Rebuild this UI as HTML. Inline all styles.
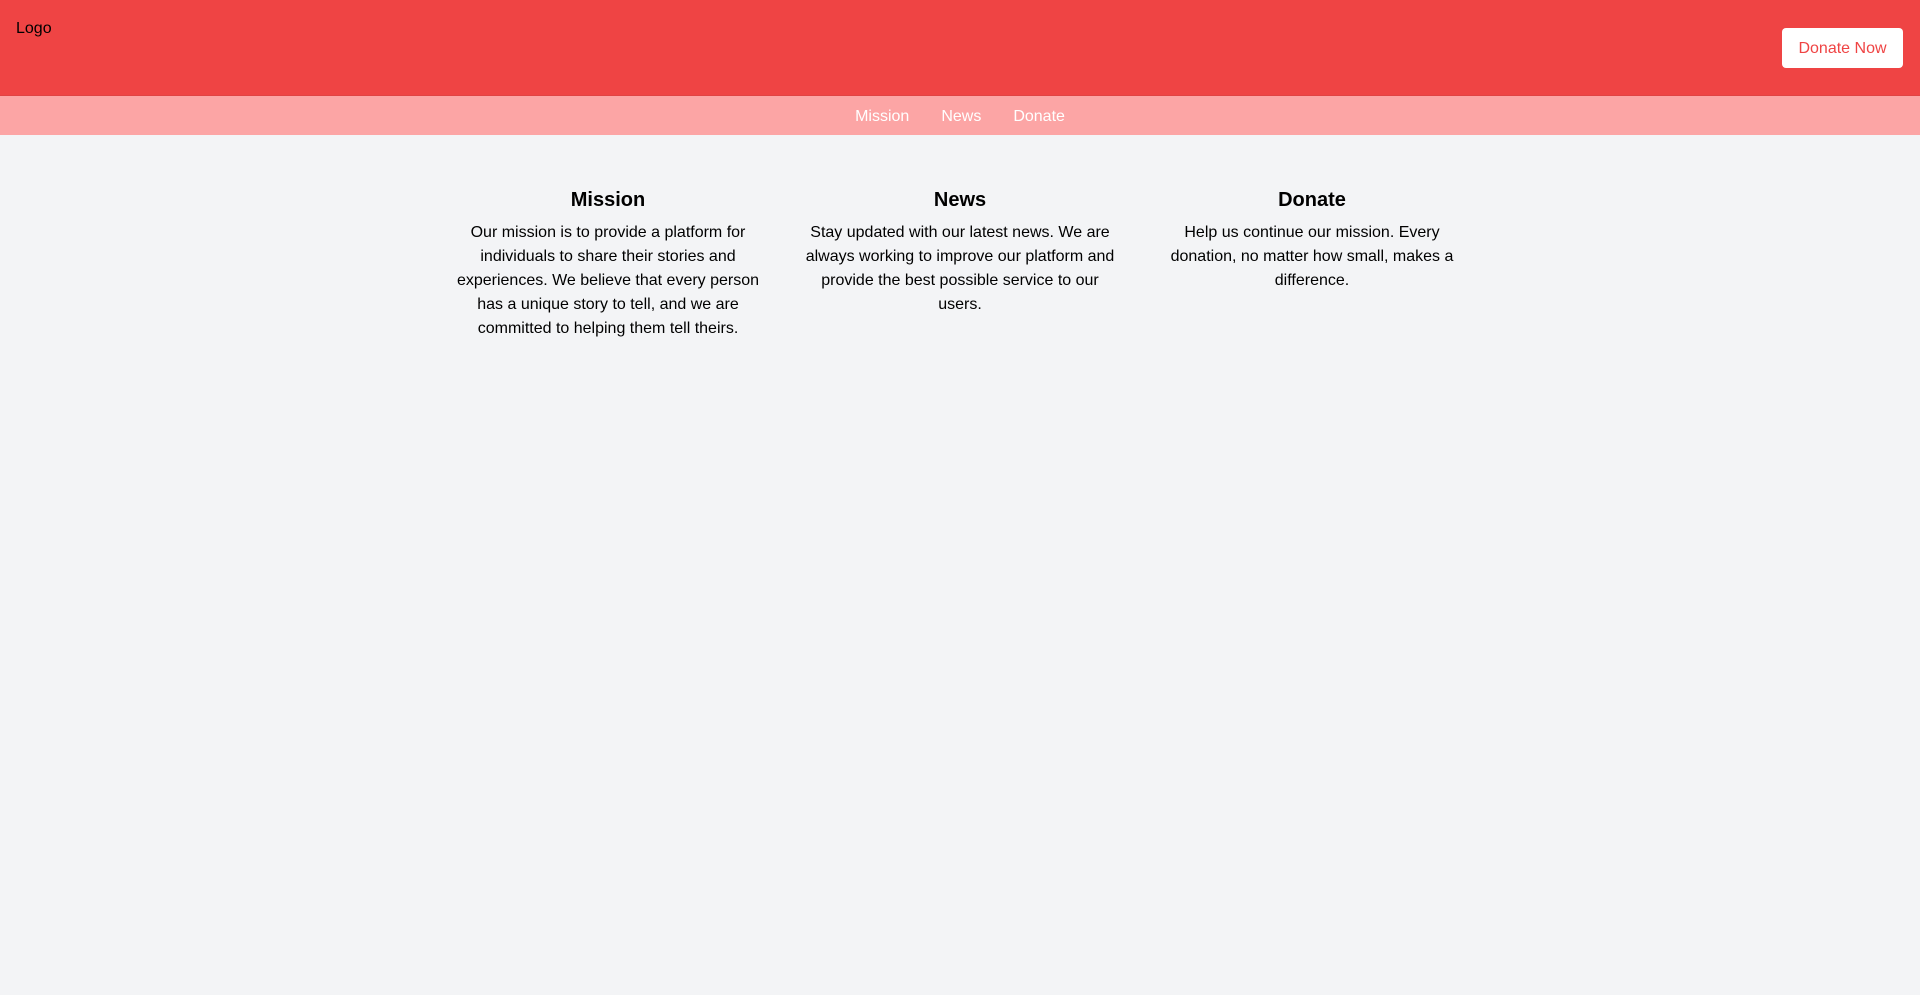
<!DOCTYPE html>
<html><head><meta charset="utf-8"><style>
*{box-sizing:border-box;margin:0;padding:0}
body{width:1920px;height:995px;background:#f3f4f6;font-family:"Liberation Sans",Arial,sans-serif;color:#000;overflow:hidden}
header{height:96px;background:#ef4444;position:relative;border-bottom:1px solid #e04343}
.logo{position:absolute;left:16px;top:19px;font-size:16px;line-height:20px}
.btn{position:absolute;right:17px;top:28px;width:121px;height:40px;background:#fff;border-radius:4px;color:#ef4444;font-size:16px;line-height:41px;text-align:center}
nav{height:39px;background:#fca5a5;display:flex;justify-content:center;align-items:center;gap:32px;padding-top:2px}
nav a{color:#fff;font-size:16px;text-decoration:none}
main{display:flex;justify-content:center;gap:32px;padding-top:51px}
.col{width:320px;padding:0;text-align:center}
h2{font-size:20px;line-height:28px;font-weight:bold;margin-bottom:7px}
p{font-size:16px;line-height:24px;letter-spacing:0;white-space:nowrap}
</style></head><body>
<header><div class="logo">Logo</div><div class="btn">Donate Now</div></header>
<nav><a>Mission</a><a>News</a><a>Donate</a></nav>
<main>
<div class="col"><h2>Mission</h2><p>Our mission is to provide a platform for<br>individuals to share their stories and<br>experiences. We believe that every person<br>has a unique story to tell, and we are<br>committed to helping them tell theirs.</p></div>
<div class="col"><h2>News</h2><p>Stay updated with our latest news. We are<br>always working to improve our platform and<br>provide the best possible service to our<br>users.</p></div>
<div class="col"><h2>Donate</h2><p>Help us continue our mission. Every<br>donation, no matter how small, makes a<br>difference.</p></div>
</main>
</body></html>
